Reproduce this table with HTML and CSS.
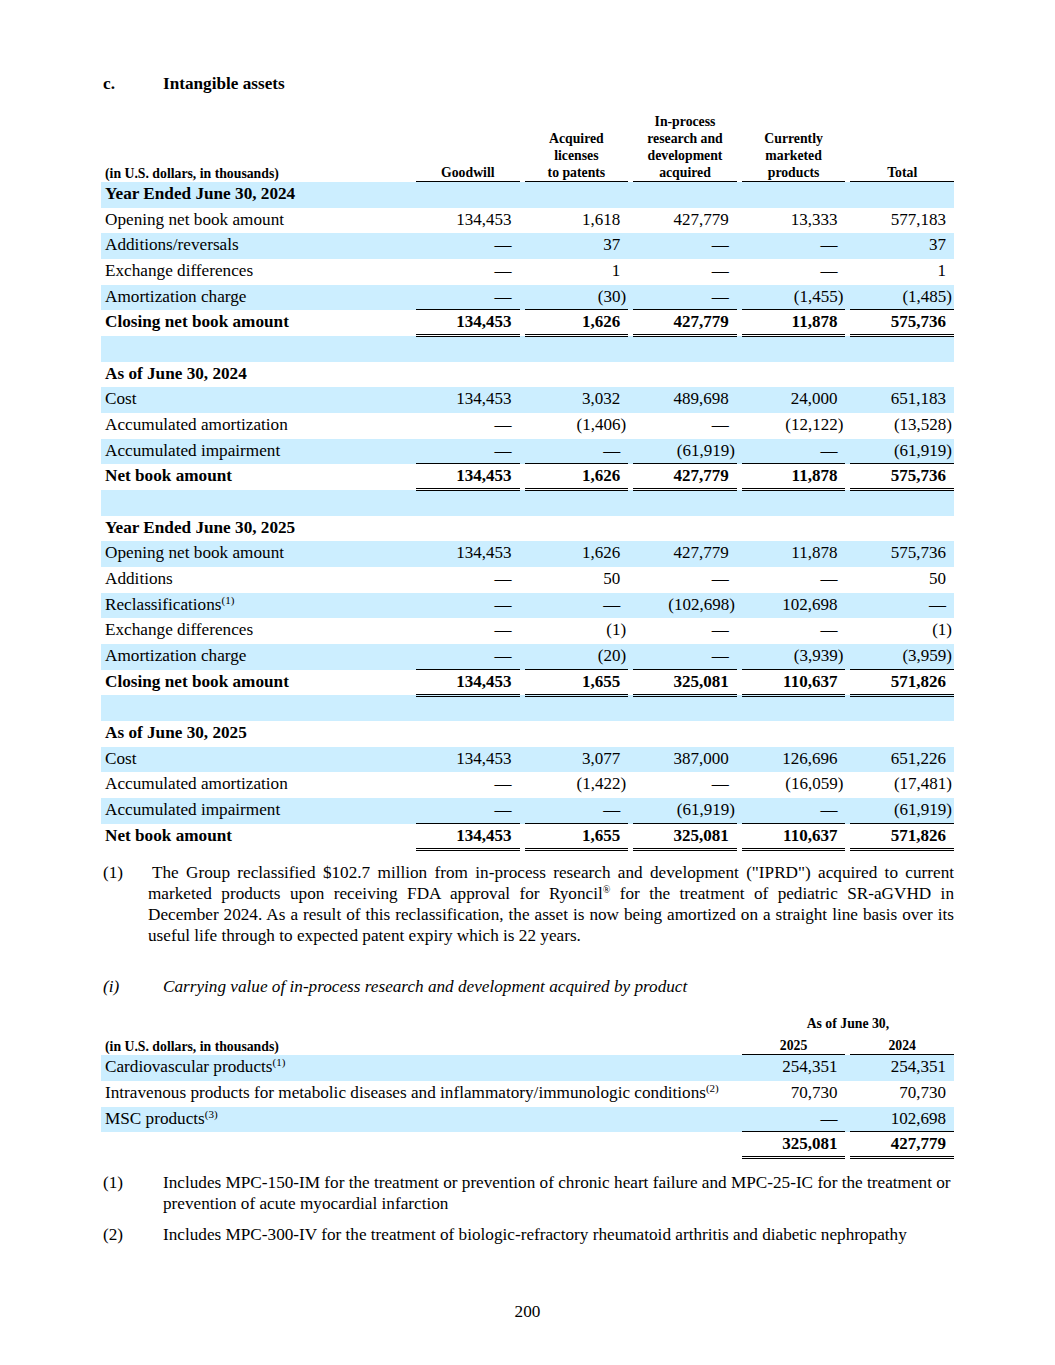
FILE: index.html
```html
<!DOCTYPE html>
<html lang="en">
<head>
<meta charset="utf-8">
<title>Intangible assets</title>
<link rel="stylesheet" href="styles.css">
</head>
<body>
<div class="page">
  <h2 class="section-title"><span class="marker">c.</span>Intangible assets</h2>

  <div class="fin-table t1">
    <div class="row head">
      <div class="cell label">(in U.S. dollars, in thousands)</div>
      <div class="cell col">Goodwill</div>
      <div class="cell col">Acquired<br>licenses<br>to patents</div>
      <div class="cell col">In-process<br>research and<br>development<br>acquired</div>
      <div class="cell col">Currently<br>marketed<br>products</div>
      <div class="cell col">Total</div>
    </div>
    <div class="tbody">
      <div class="row bold"><div class="cell label">Year Ended June 30, 2024</div><div class="cell"></div><div class="cell"></div><div class="cell"></div><div class="cell"></div><div class="cell"></div></div>
      <div class="row"><div class="cell label">Opening net book amount</div><div class="cell num">134,453</div><div class="cell num">1,618</div><div class="cell num">427,779</div><div class="cell num">13,333</div><div class="cell num">577,183</div></div>
      <div class="row"><div class="cell label">Additions/reversals</div><div class="cell num">—</div><div class="cell num">37</div><div class="cell num">—</div><div class="cell num">—</div><div class="cell num">37</div></div>
      <div class="row"><div class="cell label">Exchange differences</div><div class="cell num">—</div><div class="cell num">1</div><div class="cell num">—</div><div class="cell num">—</div><div class="cell num">1</div></div>
      <div class="row"><div class="cell label">Amortization charge</div><div class="cell num ul">—</div><div class="cell num ul neg">(30)</div><div class="cell num ul">—</div><div class="cell num ul neg">(1,455)</div><div class="cell num ul neg">(1,485)</div></div>
      <div class="row bold"><div class="cell label">Closing net book amount</div><div class="cell num dbl">134,453</div><div class="cell num dbl">1,626</div><div class="cell num dbl">427,779</div><div class="cell num dbl">11,878</div><div class="cell num dbl">575,736</div></div>
      <div class="row"><div class="cell label"></div><div class="cell"></div><div class="cell"></div><div class="cell"></div><div class="cell"></div><div class="cell"></div></div>
      <div class="row bold"><div class="cell label">As of June 30, 2024</div><div class="cell"></div><div class="cell"></div><div class="cell"></div><div class="cell"></div><div class="cell"></div></div>
      <div class="row"><div class="cell label">Cost</div><div class="cell num">134,453</div><div class="cell num">3,032</div><div class="cell num">489,698</div><div class="cell num">24,000</div><div class="cell num">651,183</div></div>
      <div class="row"><div class="cell label">Accumulated amortization</div><div class="cell num">—</div><div class="cell num neg">(1,406)</div><div class="cell num">—</div><div class="cell num neg">(12,122)</div><div class="cell num neg">(13,528)</div></div>
      <div class="row"><div class="cell label">Accumulated impairment</div><div class="cell num ul">—</div><div class="cell num ul">—</div><div class="cell num ul neg">(61,919)</div><div class="cell num ul">—</div><div class="cell num ul neg">(61,919)</div></div>
      <div class="row bold"><div class="cell label">Net book amount</div><div class="cell num dbl">134,453</div><div class="cell num dbl">1,626</div><div class="cell num dbl">427,779</div><div class="cell num dbl">11,878</div><div class="cell num dbl">575,736</div></div>
      <div class="row"><div class="cell label"></div><div class="cell"></div><div class="cell"></div><div class="cell"></div><div class="cell"></div><div class="cell"></div></div>
      <div class="row bold"><div class="cell label">Year Ended June 30, 2025</div><div class="cell"></div><div class="cell"></div><div class="cell"></div><div class="cell"></div><div class="cell"></div></div>
      <div class="row"><div class="cell label">Opening net book amount</div><div class="cell num">134,453</div><div class="cell num">1,626</div><div class="cell num">427,779</div><div class="cell num">11,878</div><div class="cell num">575,736</div></div>
      <div class="row"><div class="cell label">Additions</div><div class="cell num">—</div><div class="cell num">50</div><div class="cell num">—</div><div class="cell num">—</div><div class="cell num">50</div></div>
      <div class="row"><div class="cell label">Reclassifications<sup>(1)</sup></div><div class="cell num">—</div><div class="cell num">—</div><div class="cell num neg">(102,698)</div><div class="cell num">102,698</div><div class="cell num">—</div></div>
      <div class="row"><div class="cell label">Exchange differences</div><div class="cell num">—</div><div class="cell num neg">(1)</div><div class="cell num">—</div><div class="cell num">—</div><div class="cell num neg">(1)</div></div>
      <div class="row"><div class="cell label">Amortization charge</div><div class="cell num ul">—</div><div class="cell num ul neg">(20)</div><div class="cell num ul">—</div><div class="cell num ul neg">(3,939)</div><div class="cell num ul neg">(3,959)</div></div>
      <div class="row bold"><div class="cell label">Closing net book amount</div><div class="cell num dbl">134,453</div><div class="cell num dbl">1,655</div><div class="cell num dbl">325,081</div><div class="cell num dbl">110,637</div><div class="cell num dbl">571,826</div></div>
      <div class="row"><div class="cell label"></div><div class="cell"></div><div class="cell"></div><div class="cell"></div><div class="cell"></div><div class="cell"></div></div>
      <div class="row bold"><div class="cell label">As of June 30, 2025</div><div class="cell"></div><div class="cell"></div><div class="cell"></div><div class="cell"></div><div class="cell"></div></div>
      <div class="row"><div class="cell label">Cost</div><div class="cell num">134,453</div><div class="cell num">3,077</div><div class="cell num">387,000</div><div class="cell num">126,696</div><div class="cell num">651,226</div></div>
      <div class="row"><div class="cell label">Accumulated amortization</div><div class="cell num">—</div><div class="cell num neg">(1,422)</div><div class="cell num">—</div><div class="cell num neg">(16,059)</div><div class="cell num neg">(17,481)</div></div>
      <div class="row"><div class="cell label">Accumulated impairment</div><div class="cell num ul">—</div><div class="cell num ul">—</div><div class="cell num ul neg">(61,919)</div><div class="cell num ul">—</div><div class="cell num ul neg">(61,919)</div></div>
      <div class="row bold"><div class="cell label">Net book amount</div><div class="cell num dbl">134,453</div><div class="cell num dbl">1,655</div><div class="cell num dbl">325,081</div><div class="cell num dbl">110,637</div><div class="cell num dbl">571,826</div></div>
    </div>
  </div>

  <p class="fn fn-a"><span class="fn-line"><span class="fn-mark">(1)</span>The Group reclassified $102.7 million from in-process research and development ("IPRD") acquired to current</span> <span class="fn-line">marketed products upon receiving FDA approval for Ryoncil<sup class="reg">®</sup> for the treatment of pediatric SR-aGVHD in</span> <span class="fn-line">December 2024. As a result of this reclassification, the asset is now being amortized on a straight line basis over its</span> useful life through to expected patent expiry which is 22 years.</p>

  <h3 class="sub-title"><span class="marker">(i)</span>Carrying value of in-process research and development acquired by product</h3>

  <div class="fin-table t2">
    <div class="row head head-top">
      <div class="cell label"></div>
      <div class="cell span2">As of June 30,</div>
    </div>
    <div class="row head">
      <div class="cell label">(in U.S. dollars, in thousands)</div>
      <div class="cell col">2025</div>
      <div class="cell col">2024</div>
    </div>
    <div class="tbody">
      <div class="row"><div class="cell label">Cardiovascular products<sup>(1)</sup></div><div class="cell num">254,351</div><div class="cell num">254,351</div></div>
      <div class="row"><div class="cell label">Intravenous products for metabolic diseases and inflammatory/immunologic conditions<sup>(2)</sup></div><div class="cell num">70,730</div><div class="cell num">70,730</div></div>
      <div class="row"><div class="cell label">MSC products<sup>(3)</sup></div><div class="cell num ul">—</div><div class="cell num ul">102,698</div></div>
      <div class="row bold"><div class="cell label"></div><div class="cell num dbl">325,081</div><div class="cell num dbl">427,779</div></div>
    </div>
  </div>

  <div class="notes">
    <p class="fn fn-b"><span class="fn-mark">(1)</span>Includes MPC-150-IM for the treatment or prevention of chronic heart failure and MPC-25-IC for the treatment or prevention of acute myocardial infarction</p>
    <p class="fn fn-b"><span class="fn-mark">(2)</span>Includes MPC-300-IV for the treatment of biologic-refractory rheumatoid arthritis and diabetic nephropathy</p>
  </div>

  <div class="page-num">200</div>
</div>
</body>
</html>
```

FILE: styles.css
```css
html, body {
  margin: 0;
  padding: 0;
  background: #ffffff;
}

body {
  font-family: "Liberation Serif", "Times New Roman", serif;
  color: #000000;
  font-size: 17.2px;
}

.page {
  width: 853px;
  padding: 74px 0 0 101px;
}

.section-title {
  margin: 0 0 19px 2px;
  font-size: 17.2px;
  line-height: 20px;
  font-weight: bold;
}

.section-title .marker,
.sub-title .marker {
  display: inline-block;
  width: 60px;
}

.fin-table .row {
  display: grid;
  column-gap: 5px;
  height: 25.68px;
}

.t1 .row {
  grid-template-columns: 310px repeat(5, 1fr);
}

.t2 .row {
  grid-template-columns: 1fr 103.6px 103.6px;
}

.fin-table .row.head {
  height: auto;
  align-items: end;
}

.tbody .row:nth-child(odd) {
  background: #cceeff;
}

.cell {
  box-sizing: border-box;
  height: 100%;
  line-height: 24px;
  white-space: nowrap;
}

.cell.label {
  padding-left: 4px;
}

.head .cell {
  height: auto;
  font-size: 13.75px;
  line-height: 17px;
  font-weight: bold;
}

.head .cell.col {
  text-align: center;
  border-bottom: 1px solid #000;
}

.head-top {
  margin-bottom: 5px;
}

.head .cell.span2 {
  grid-column: 2 / span 2;
  text-align: center;
}

.row.bold .cell {
  font-weight: bold;
}

.cell.num {
  font-size: 17px;
  text-align: right;
  padding-right: 8px;
}

.cell.num.neg {
  padding-right: 2px;
}

.cell.ul {
  border-bottom: 1px solid #000;
}

.cell.dbl {
  border-bottom: 3px double #000;
}

sup {
  font-size: 11px;
  line-height: 0;
  vertical-align: 6px;
}

sup.reg {
  font-size: 10px;
}

.fn {
  margin: 0;
  line-height: 21px;
  text-align: justify;
}

.fn-a {
  margin-top: 13px;
  margin-left: 2px;
  padding-left: 45px;
  text-indent: -45px;
}

.fn-a .fn-line {
  display: block;
  text-align: justify;
  text-align-last: justify;
  white-space: nowrap;
}

.fn-a .fn-line + .fn-line {
  text-indent: 0;
}

.fn-a .fn-mark {
  display: inline-block;
  width: 49px;
  text-indent: 0;
}

.sub-title {
  margin: 30px 0 18px 2px;
  font-size: 17.2px;
  line-height: 21px;
  font-weight: normal;
  font-style: italic;
}

.notes {
  margin-top: 14px;
}

.fn-b {
  margin-left: 2px;
  padding-left: 60px;
  text-indent: -60px;
  text-align: left;
}

.fn-b + .fn-b {
  margin-top: 10px;
}

.fn-b .fn-mark {
  display: inline-block;
  width: 60px;
  text-indent: 0;
}

.page-num {
  margin-top: 56px;
  text-align: center;
  line-height: 21px;
}
```
